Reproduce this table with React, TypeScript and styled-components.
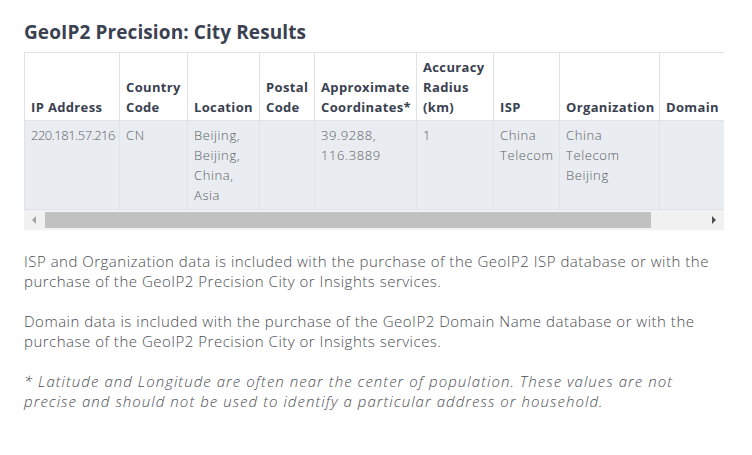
import * as React from "react";
import styled, { createGlobalStyle } from "styled-components";

const GlobalStyle = createGlobalStyle`
  html, body {
    margin: 0;
    padding: 0;
    background: #ffffff;
  }
  body {
    font-family: "Open Sans", "DejaVu Sans", sans-serif;
    color: #4a4a4a;
  }
`;

const Page = styled.div`
  padding: 19px 24px 0 24px;
  width: 700px;
`;

const Title = styled.h2`
  margin: 0 0 7px 0;
  font-size: 19px;
  line-height: 26px;
  font-weight: 700;
  color: #3a4150;
  letter-spacing: 0.1px;
`;

const TableWrapper = styled.div`
  width: 700px;
  overflow: hidden;
`;

const Table = styled.table`
  border-collapse: collapse;
  table-layout: fixed;
  width: 761px;
  font-size: 13px;
`;

const HeadCell = styled.th<{ $w: number }>`
  width: ${(p) => p.$w}px;
  box-sizing: border-box;
  padding: 4px 5px 3px 6px;
  text-align: left;
  vertical-align: bottom;
  line-height: 20px;
  font-weight: 700;
  letter-spacing: 0.35px;
  color: #3a4150;
  border: 1px solid #dfe2e6;
  background: #ffffff;
  white-space: nowrap;
`;

const BodyRow = styled.tr`
  background: #e9ecf0;
`;

const Cell = styled.td<{ $tight?: boolean }>`
  padding: 4px 5px 4px 6px;
  vertical-align: top;
  line-height: 20px;
  font-weight: 300;
  letter-spacing: ${(p) => (p.$tight ? "-0.5px" : "0.6px")};
  white-space: nowrap;
  color: #5a5f66;
  border: 1px solid #dfe2e6;
`;

/* drawn scrollbar under the table (the headless browser hides real ones) */
const ScrollBar = styled.div`
  display: flex;
  align-items: stretch;
  height: 20px;
  width: 700px;
  background: #f1f1f1;
`;

const ScrollButton = styled.div<{ $dir: "left" | "right"; $active?: boolean }>`
  flex: 0 0 20px;
  display: flex;
  align-items: center;
  justify-content: center;

  &::before {
    content: "";
    width: 0;
    height: 0;
    border-top: 4px solid transparent;
    border-bottom: 4px solid transparent;
    ${(p) =>
      p.$dir === "left"
        ? `border-right: 4px solid ${p.$active ? "#505050" : "#a3a3a3"};`
        : `border-left: 4px solid ${p.$active ? "#505050" : "#a3a3a3"};`}
  }
`;

const ScrollTrack = styled.div`
  flex: 1;
  display: flex;
  align-items: stretch;
  padding: 2px 0 2px 1px;
`;

const ScrollThumb = styled.div<{ $ratio: number }>`
  width: ${(p) => (p.$ratio * 100).toFixed(1)}%;
  background: #c1c1c1;
`;

const Note = styled.p<{ $italic?: boolean }>`
  margin: 20px 0 0 0;
  font-size: 15px;
  line-height: 20px;
  font-weight: 300;
  letter-spacing: ${(p) => (p.$italic ? "1.05px" : "0.5px")};
  color: #4a4d52;
  font-style: ${(p) => (p.$italic ? "italic" : "normal")};

  &:first-of-type {
    margin-top: 21px;
  }
`;

const columns: { label: React.ReactNode; w: number }[] = [
  { label: "IP Address", w: 95 },
  { label: <>Country<br />Code</>, w: 68 },
  { label: "Location", w: 72 },
  { label: <>Postal<br />Code</>, w: 55 },
  { label: <>Approximate<br />Coordinates*</>, w: 102 },
  { label: <>Accuracy<br />Radius<br />(km)</>, w: 77 },
  { label: "ISP", w: 66 },
  { label: "Organization", w: 100 },
  { label: "Domain", w: 126 },
];

const row: React.ReactNode[] = [
  "220.181.57.216",
  "CN",
  <>Beijing,<br />Beijing,<br />China,<br />Asia</>,
  "",
  <>39.9288,<br />116.3889</>,
  "1",
  <>China<br />Telecom</>,
  <>China<br />Telecom<br />Beijing</>,
  "",
];

const App = () => {
  return (
    <>
      <GlobalStyle />
      <Page>
        <Title>GeoIP2 Precision: City Results</Title>
        <TableWrapper>
          <Table>
            <thead>
              <tr>
                {columns.map((c, i) => (
                  <HeadCell key={i} $w={c.w}>
                    {c.label}
                  </HeadCell>
                ))}
              </tr>
            </thead>
            <tbody>
              <BodyRow>
                {row.map((v, i) => (
                  <Cell key={i} $tight={i === 0}>
                    {v}
                  </Cell>
                ))}
              </BodyRow>
            </tbody>
          </Table>
        </TableWrapper>
        <ScrollBar>
          <ScrollButton $dir="left" />
          <ScrollTrack>
            <ScrollThumb $ratio={0.92} />
          </ScrollTrack>
          <ScrollButton $dir="right" $active />
        </ScrollBar>
        <Note>
          ISP and Organization data is included with the purchase of the GeoIP2
          ISP database or with the purchase of the GeoIP2 Precision City or
          Insights services.
        </Note>
        <Note>
          Domain data is included with the purchase of the GeoIP2 Domain Name
          database or with the purchase of the GeoIP2 Precision City or Insights
          services.
        </Note>
        <Note $italic>
          * Latitude and Longitude are often near the center of population.
          These values are not precise and should not be used to identify a
          particular address or household.
        </Note>
      </Page>
    </>
  );
};

export default App;
